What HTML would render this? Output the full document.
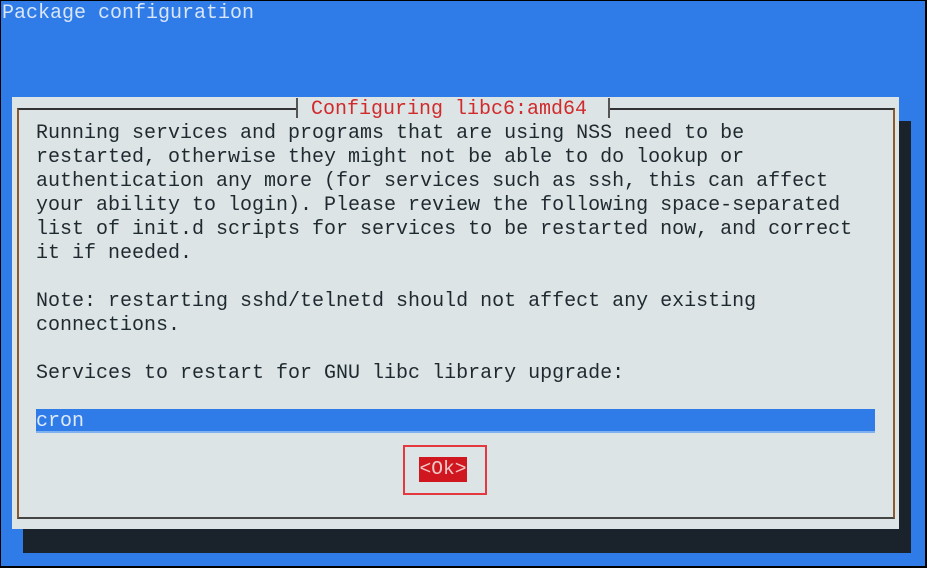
<!DOCTYPE html>
<html><head><meta charset="utf-8"><style>
*{margin:0;padding:0}
body{width:927px;height:568px;overflow:hidden;background:#000;position:relative;font-family:"Liberation Mono","DejaVu Sans Mono",monospace}
.bg{position:absolute;left:1px;top:1px;width:924px;height:565px;background:#2f7be8}
.t{position:absolute;white-space:pre;font-size:20px;line-height:24px;color:#1f2a30}
.shadow{position:absolute;left:23px;top:121px;width:888px;height:432px;background:#1a232c}
.dlg{position:absolute;left:12px;top:97px;width:887px;height:432px;background:#dde4e6}
.frame{position:absolute;left:17px;top:108px;width:874px;height:407px;border-left:2px solid #8a5a33;border-top:2px solid #333;border-right:2px solid #8a5a33;border-bottom:2px solid #444}
.gap{position:absolute;left:296px;top:98px;width:310px;height:20px;background:#dde4e6;border-left:2px solid #555;border-right:2px solid #555}
.inp{position:absolute;left:36px;top:409px;width:839px;height:22px;background:#2f7be8;border-bottom:2px solid #7fb0f0}
.ok{position:absolute;left:419px;top:457px;width:48px;height:25px;background:#d0161e;color:#f0c8c8;font-size:19.6px;line-height:25px;text-align:center}
.box{position:absolute;left:403px;top:445px;width:80px;height:46px;border:2px solid #e5393f}
</style></head><body>
<div class="bg"></div>
<div class="t" style="left:2px;top:2px;color:#d8e6f8">Package configuration</div>
<div class="shadow"></div>
<div class="dlg"></div>
<div class="frame"></div>
<div class="gap"></div>
<div class="t" style="left:311px;top:98px;color:#d02a2a">Configuring libc6:amd64</div>
<div class="t" style="left:36px;top:122px">Running services and programs that are using NSS need to be
restarted, otherwise they might not be able to do lookup or
authentication any more (for services such as ssh, this can affect
your ability to login). Please review the following space-separated
list of init.d scripts for services to be restarted now, and correct
it if needed.

Note: restarting sshd/telnetd should not affect any existing
connections.

Services to restart for GNU libc library upgrade:</div>
<div class="inp"></div>
<div class="t" style="left:36px;top:410px;color:#dfeaf8">cron</div>
<div class="ok">&lt;Ok&gt;</div>
<div class="box"></div>
</body></html>
